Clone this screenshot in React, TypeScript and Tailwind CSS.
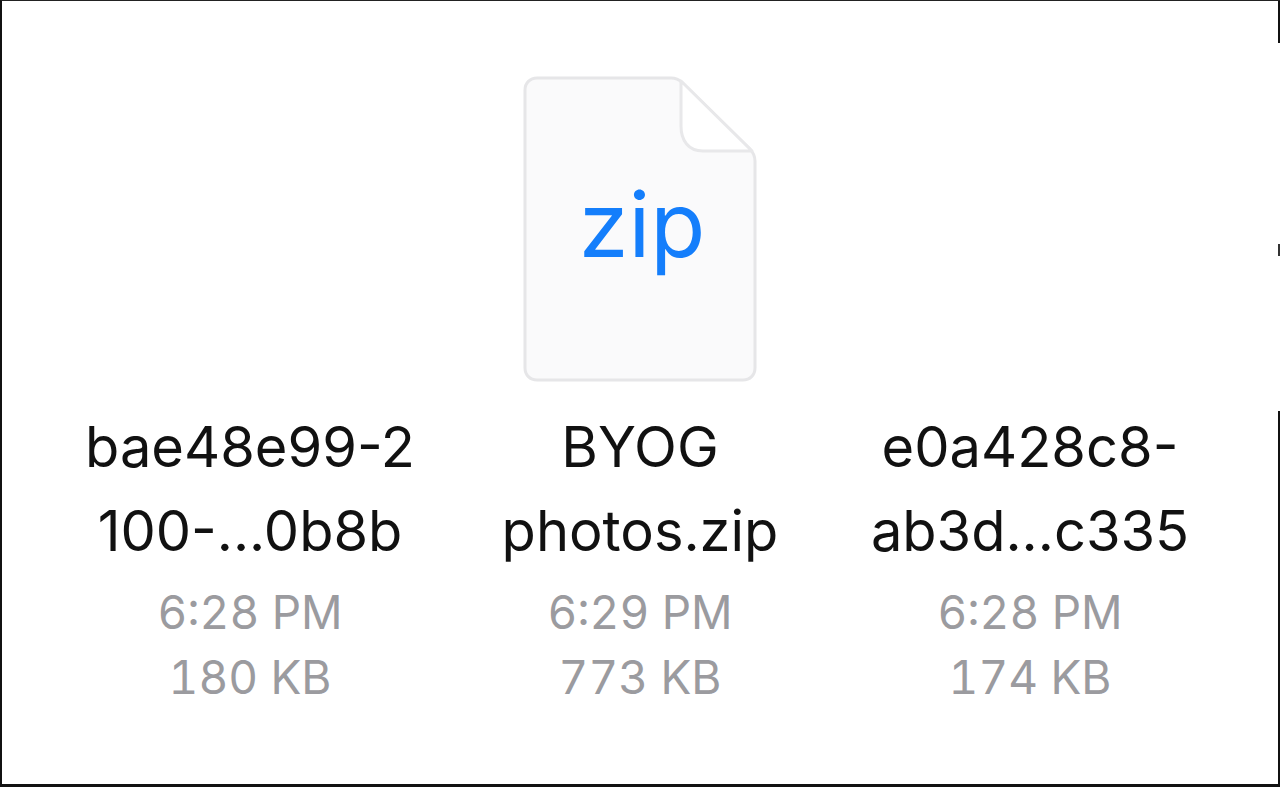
const files = [
  { name: ['bae48e99-2', '100-...0b8b'], time: '6:28 PM', size: '180 KB' },
  { name: ['BYOG', 'photos.zip'], time: '6:29 PM', size: '773 KB' },
  { name: ['e0a428c8-', 'ab3d...c335'], time: '6:28 PM', size: '174 KB' },
]

function ZipIcon() {
  return (
    <div className="relative w-[234px] h-[306px]">
      <svg className="absolute inset-0 w-full h-full" viewBox="0 0 234 306" fill="none">
        <path
          d="M14 2H148C153 2 156 3.500 159 6.500L226 72C230 76 232 80 232 85V292C232 299 227 304 220 304H14C7 304 2 299 2 292V14C2 7 7 2 14 2Z"
          fill="#fafafb"
          stroke="#e6e6e8"
          strokeWidth="3"
        />
        <path
          d="M158 5V50C158 64 165 75 180 75H229L158 5Z"
          fill="#ffffff"
          stroke="#e8e8ea"
          strokeWidth="3"
          strokeLinejoin="round"
        />
      </svg>
      <span className="absolute inset-x-0 top-[99px] pl-[4px] text-center text-[#147efb] text-[90px] leading-[100px] font-['Inter',sans-serif]">
        zip
      </span>
    </div>
  )
}

export default function App() {
  return (
    <div className="relative w-[1280px] h-[787px] bg-white border-t border-l-2 border-b-[3px] border-t-[#222222] border-l-[#111111] border-b-[#111111] overflow-hidden font-['Inter',sans-serif]">
      {/* broken right edge of the screenshot frame */}
      <div className="absolute top-0 right-0 w-[2px] h-[42px] bg-[#111111]" />
      <div className="absolute top-[243px] right-0 w-[2px] h-[12px] bg-[#333333]" />
      <div className="absolute top-[410px] right-0 bottom-0 w-[2px] bg-[#111111]" />

      <div className="flex justify-center pt-[75px] pr-[2px]">
        <ZipIcon />
      </div>
      <div className="grid grid-cols-[390px_390px_390px] justify-center mt-[23px] pr-[2px]">
        {files.map((file) => (
          <div key={file.time + file.size} className="flex flex-col items-center">
            <div className="text-[56px] leading-[84px] text-[#111111] text-center">
              {file.name.map((line) => (
                <div key={line}>{line}</div>
              ))}
            </div>
            <div className="mt-[7px] text-[46px] leading-[65px] text-[#9b9b9f] text-center tabular-nums">
              <div>{file.time}</div>
              <div>{file.size}</div>
            </div>
          </div>
        ))}
      </div>
    </div>
  )
}
